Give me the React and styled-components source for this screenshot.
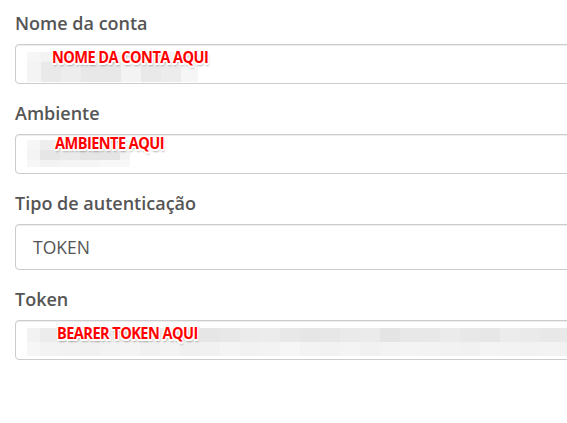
import React from "react";
import styled, { createGlobalStyle } from "styled-components";

const Global = createGlobalStyle`
  html, body { margin: 0; padding: 0; background: #fff; overflow: hidden; }
  body { font-family: "Open Sans", "Noto Sans", sans-serif; }
`;

const Form = styled.div`
  display: flex;
  flex-direction: column;
  padding: 11px 0 0 15px;
  width: 640px;
`;

const Group = styled.div`
  display: flex;
  flex-direction: column;
  margin-bottom: 17px;
`;

const Label = styled.label`
  font-size: 18px;
  line-height: 24px;
  font-weight: 600;
  color: #555555;
  margin-bottom: 9px;
`;

const Field = styled.div`
  position: relative;
  box-sizing: border-box;
  height: ${(p) => p.$h || 40}px;
  border: 1px solid #cccccc;
  border-radius: 4px;
  background: #fff;
  box-shadow: inset 0 1px 1px rgba(0, 0, 0, 0.075);
  display: flex;
  flex-direction: column;
  align-items: flex-start;
  justify-content: ${(p) => (p.$center ? "center" : "flex-start")};
  padding: ${(p) => p.$pad || "0 0 0 11px"};
`;

const Value = styled.span`
  font-size: 17.5px;
  color: #555;
  line-height: 24px;
`;

const Mosaic = styled.div`
  display: flex;
  flex-direction: column;
  margin-top: ${(p) => p.$top}px;
`;

const MRow = styled.div`
  display: flex;
  height: ${(p) => p.$h}px;
`;

const Cell = styled.div`
  height: 100%;
  flex: none;
`;

const Stamp = styled.span`
  position: absolute;
  left: ${(p) => p.$x}px;
  top: ${(p) => p.$y}px;
  font-family: "Open Sans", sans-serif;
  font-weight: 700;
  font-size: 16px;
  line-height: 18px;
  letter-spacing: -0.6px;
  color: #ff0000;
  white-space: nowrap;
  transform: scaleX(0.91);
  transform-origin: left center;
  text-shadow: -1px -1px 0 #fff, 1px -1px 0 #fff, -1px 1px 0 #fff, 1px 1px 0 #fff,
    0 -1px 0 #fff, 0 1px 0 #fff, -1px 0 0 #fff, 1px 0 0 #fff,
    0 2px 0 #fff, 1px 2px 0 #fff, -1px 2px 0 #fff,
    1px 3px 2px rgba(0, 0, 0, 0.3);
`;

const g = (v) => `rgb(${v},${v},${v})`;

function MosaicBlock({ top, rows }) {
  return (
    <Mosaic $top={top}>
      {rows.map((r, i) => (
        <MRow key={i} $h={r.h}>
          {r.cells.map(([w, v], j) => (
            <Cell key={j} style={{ width: w, background: g(v) }} />
          ))}
        </MRow>
      ))}
    </Mosaic>
  );
}

const nomeRows = [
  { h: 10, cells: [[14, 246], [20, 243], [20, 244], [40, 242], [20, 245], [20, 244], [20, 245], [17, 247]] },
  { h: 20, cells: [[14, 244], [20, 233], [20, 237], [40, 232], [20, 243], [20, 233], [20, 236], [17, 246]] },
];

const ambRows = [
  { h: 10, cells: [[13, 246], [20, 238], [20, 241], [20, 243], [20, 245], [10, 247]] },
  { h: 10, cells: [[13, 244], [20, 230], [20, 234], [40, 229], [10, 243]] },
  { h: 7, cells: [[13, 247], [20, 243], [40, 245], [30, 248]] },
];

const tokTop = [236, 233, 235, 235, 231, 234, 236, 232, 230, 232, 235, 236, 232, 230, 231, 234, 235, 228, 232, 232, 235, 232, 231, 236, 234, 232, 233, 236];
const tokBot = [243, 242, 241, 243, 244, 241, 243, 240, 241, 244, 242, 243, 246, 243, 242, 244, 241, 243, 244, 243, 242, 241, 244, 243, 242, 243, 241, 244];
const tokenRows = [
  { h: 14, cells: [[13, 242], ...tokTop.map((v) => [20, v])] },
  { h: 14, cells: [[13, 246], ...tokBot.map((v) => [20, v])] },
];

export default function App() {
  return (
    <>
      <Global />
      <Form>
        <Group>
          <Label>Nome da conta</Label>
          <Field>
            <MosaicBlock top={7} rows={nomeRows} />
            <Stamp $x={36} $y={3}>NOME DA CONTA AQUI</Stamp>
          </Field>
        </Group>
        <Group>
          <Label>Ambiente</Label>
          <Field>
            <MosaicBlock top={5} rows={ambRows} />
            <Stamp $x={39} $y={-1}>AMBIENTE AQUI</Stamp>
          </Field>
        </Group>
        <Group>
          <Label>Tipo de autenticação</Label>
          <Field $h={46} $center $pad="0 0 0 17px">
            <Value>TOKEN</Value>
          </Field>
        </Group>
        <Group>
          <Label>Token</Label>
          <Field>
            <MosaicBlock top={7} rows={tokenRows} />
            <Stamp $x={41} $y={3}>BEARER TOKEN AQUI</Stamp>
          </Field>
        </Group>
      </Form>
    </>
  );
}
